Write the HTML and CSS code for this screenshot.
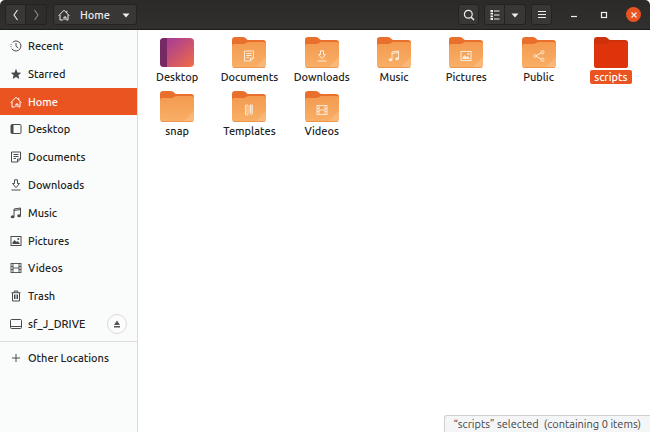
FILE: index.html
```html
<!DOCTYPE html>
<html lang="en">
<head>
<meta charset="UTF-8" />
<meta name="viewport" content="width=device-width, initial-scale=1" />
<title>Home</title>
<link rel="stylesheet" href="styles.css">
</head>
<body>

<!-- Shared icons -->
<svg class="defs" aria-hidden="true">
  <defs>
    <linearGradient id="folder-fill" x1="0" y1="0" x2="0" y2="1">
      <stop offset="0" stop-color="#f39a50" />
      <stop offset="1" stop-color="#f9b067" />
    </linearGradient>
    <linearGradient id="desktop-fill" x1="0" y1="0" x2="1" y2="1">
      <stop offset="0.2" stop-color="#ac4090" />
      <stop offset="1" stop-color="#f26c45" />
    </linearGradient>
  </defs>
  <symbol id="folder" viewBox="0 0 34 31">
    <path d="M0 9V3Q0 0 3 0H11Q13 0 14 1.5Q15 3 17 3H31Q34 3 34 6V12H0Z" fill="#e9702c" />
    <path d="M0 9Q0 7 2 7H11Q13 7 14 6Q15.500 5 17 5H32Q34 5 34 7V28Q34 31 31 31H3Q0 31 0 28Z" fill="url(#folder-fill)" />
    <path d="M34 20V28Q34 31 31 31H23Z" fill="#fff" opacity="0.14" />
    <path d="M1 30.500H33" stroke="#e98c45" opacity="0.7" />
  </symbol>
  <symbol id="folder-selected" viewBox="0 0 34 31">
    <path d="M0 9V3Q0 0 3 0H11Q13 0 14 1.500Q15 3 17 3H31Q34 3 34 6V28Q34 31 31 31H3Q0 31 0 28Z" fill="#cf310b" />
    <path d="M0 9Q0 7 2 7H11Q13 7 14 6Q15.500 5 17 5H32Q34 5 34 7V28Q34 31 31 31H3Q0 31 0 28Z" fill="#df340b" />
  </symbol>
  <symbol id="desktop-folder" viewBox="0 0 34 31">
    <rect y="1" width="34" height="29" rx="4" fill="url(#desktop-fill)" />
    <path d="M7 1H4Q0 1 0 5V26Q0 30 4 30H7Z" fill="#762a64" />
  </symbol>

  <symbol id="recent" viewBox="0 0 12 12">
    <path d="M3.200 1.800A5 5 0 1 1 1.700 8.600" fill="none" stroke="currentColor" />
    <path d="M1.100 7.200A5 5 0 0 1 2.400 2.500" fill="none" stroke="currentColor" stroke-dasharray="1 1.200" />
    <path d="M6 3V6.200L8.200 8" fill="none" stroke="currentColor" />
  </symbol>
  <symbol id="star" viewBox="0 0 12 12">
    <path d="M6 .8 7.500 4.400 11.200 4.700 8.400 7.200 9.300 11 6 9 2.700 11 3.600 7.200 .8 4.700 4.500 4.400Z" fill="currentColor" />
  </symbol>
  <symbol id="home" viewBox="0 0 12 12">
    <path d="M.7 6.700 6 1.200 11.300 6.700M8.800 3.600V1.800M2 5.800V11H4.800M10 5.800V11H8.500M6 11V8H8V11" fill="none" stroke="currentColor" />
  </symbol>
  <symbol id="desktop" viewBox="0 0 12 12">
    <rect x="1" y="1.500" width="10" height="9" rx="1" fill="none" stroke="currentColor" />
    <path d="M1 2H3.500V10H1Z" fill="currentColor" />
  </symbol>
  <symbol id="documents" viewBox="0 0 12 12">
    <path d="M1.500 1H10.500V8L7.500 11H1.500ZM10.500 8H7.500V11M3.500 3.500H8.500M3.500 5.500H8.500M3.500 7.500H6" fill="none" stroke="currentColor" />
  </symbol>
  <symbol id="downloads" viewBox="0 0 12 12">
    <path d="M4.500 .8H7.500V4.500H9.500L6 8.700 2.500 4.500H4.500ZM1.500 11H10.500" fill="none" stroke="currentColor" />
  </symbol>
  <symbol id="music" viewBox="0 0 12 12">
    <path d="M4 9.500V2L10.500 1V8.500M4 3.500 10.500 2.500" fill="none" stroke="currentColor" />
    <ellipse cx="2.600" cy="9.800" rx="1.900" ry="1.500" fill="currentColor" />
    <ellipse cx="9.100" cy="8.800" rx="1.900" ry="1.500" fill="currentColor" />
  </symbol>
  <symbol id="pictures" viewBox="0 0 12 12">
    <rect x="1" y="1.500" width="10" height="9" fill="none" stroke="currentColor" />
    <path d="M2.500 9V7.500L4.500 5 6.500 7 7.500 6 9.500 8V9Z" fill="currentColor" />
    <circle cx="8.300" cy="4" r="1" fill="currentColor" />
  </symbol>
  <symbol id="videos" viewBox="0 0 12 12">
    <path d="M1 1V11M11 1V11M3 1.500V10.500M9 1.500V10.500M1 1.500H11M1 10.500H11M3 6H9M1 4.500H3M1 7.500H3M9 4.500H11M9 7.500H11" fill="none" stroke="currentColor" stroke-width="0.9" />
  </symbol>
  <symbol id="trash" viewBox="0 0 12 12">
    <path d="M1.500 2.700H10.500M4.300 2.500V1H7.700V2.500M2.500 3V11H9.500V3M4.500 4.500V9M6 4.500V9M7.500 4.500V9" fill="none" stroke="currentColor" />
  </symbol>
  <symbol id="drive" viewBox="0 0 12 12">
    <rect x=".5" y="1.500" width="11" height="9" rx="1" fill="none" stroke="currentColor" />
    <path d="M1 8.500H11" stroke="currentColor" />
  </symbol>
  <symbol id="plus" viewBox="0 0 12 12">
    <path d="M6 2V10M2 6H10" stroke="currentColor" />
  </symbol>
  <symbol id="eject" viewBox="0 0 12 12">
    <path d="M6 2.500 9 7H3ZM3 8H9V9.500H3Z" fill="currentColor" />
  </symbol>
  <symbol id="public" viewBox="0 0 12 12">
    <path d="M9 2.500 2.500 6 9 9.500" fill="none" stroke="currentColor" />
    <g fill="#f5a55a" stroke="currentColor">
      <circle cx="9.500" cy="2.300" r="1.500" />
      <circle cx="2.300" cy="6" r="1.300" />
      <circle cx="9.500" cy="9.700" r="1.500" />
    </g>
  </symbol>
  <symbol id="templates" viewBox="0 0 12 12">
    <path d="M2.500 1H5V11H2.500ZM2.500 3H4M2.500 5H4M2.500 7H4M2.500 9H4M7 1H9.500V9L8.300 11 7 9Z" fill="none" stroke="currentColor" stroke-width="0.8" />
    <path d="M7 1H8.500V9H7Z" fill="currentColor" />
  </symbol>
  <symbol id="back" viewBox="0 0 12 12">
    <path d="M7.500 1 4 6 7.500 11" fill="none" stroke="currentColor" stroke-width="1.100" />
  </symbol>
  <symbol id="forward" viewBox="0 0 12 12">
    <path d="M4.500 1 8 6 4.500 11" fill="none" stroke="currentColor" stroke-width="1.100" />
  </symbol>
  <symbol id="caret" viewBox="0 0 12 12">
    <path d="M2.500 4.500H9.500L6 8.500Z" fill="currentColor" />
  </symbol>
  <symbol id="search" viewBox="0 0 12 12">
    <circle cx="5.300" cy="5.300" r="3.900" fill="none" stroke="currentColor" stroke-width="1.200" />
    <path d="M8.200 8.200 11 11" stroke="currentColor" stroke-width="1.500" />
  </symbol>
  <symbol id="list" viewBox="0 0 12 12">
    <path d="M1.500 2H4M1.500 4.700H4M1.500 7.300H4M1.500 10H4" stroke="currentColor" stroke-width="1.800" />
    <path d="M5 2H10.500M5 6H10.500M5 10H10.500" stroke="currentColor" stroke-width="1.100" />
  </symbol>
  <symbol id="menu" viewBox="0 0 12 12">
    <path d="M2 2.500H10M2 5.500H10M2 8.500H10" stroke="currentColor" />
  </symbol>
  <symbol id="minimize" viewBox="0 0 12 12">
    <path d="M3 7.500H9" stroke="currentColor" stroke-width="1.200" />
  </symbol>
  <symbol id="maximize" viewBox="0 0 12 12">
    <rect x="3.500" y="3.500" width="5" height="5" fill="none" stroke="currentColor" stroke-width="1.200" />
  </symbol>
  <symbol id="close" viewBox="0 0 12 12">
    <path d="M3.500 3.500 8.500 8.500M8.500 3.500 3.500 8.500" stroke="currentColor" stroke-width="1.300" />
  </symbol>
</svg>

<div class="window">

  <!-- Header bar -->
  <header class="headerbar">
    <div class="btn-group">
      <button type="button" class="btn" aria-label="Back"><svg class="icon"><use href="#back" /></svg></button>
      <button type="button" class="btn btn-dim" aria-label="Forward"><svg class="icon"><use href="#forward" /></svg></button>
    </div>
    <button type="button" class="btn path-btn">
      <svg class="icon"><use href="#home" /></svg>
      <span>Home</span>
      <svg class="icon"><use href="#caret" /></svg>
    </button>
    <div class="header-actions">
      <button type="button" class="btn" aria-label="Search"><svg class="icon"><use href="#search" /></svg></button>
      <div class="btn-group">
        <button type="button" class="btn" aria-label="List view"><svg class="icon"><use href="#list" /></svg></button>
        <button type="button" class="btn" aria-label="View options"><svg class="icon"><use href="#caret" /></svg></button>
      </div>
      <button type="button" class="btn" aria-label="Menu"><svg class="icon"><use href="#menu" /></svg></button>
    </div>
    <div class="window-controls">
      <button type="button" class="control" aria-label="Minimize"><svg class="icon"><use href="#minimize" /></svg></button>
      <button type="button" class="control" aria-label="Maximize"><svg class="icon"><use href="#maximize" /></svg></button>
      <button type="button" class="control close" aria-label="Close"><svg class="icon"><use href="#close" /></svg></button>
    </div>
  </header>

  <div class="content">

    <!-- Sidebar -->
    <nav class="sidebar" aria-label="Places">
      <ul class="places">
        <li><a href="#" class="place"><svg class="icon"><use href="#recent" /></svg>Recent</a></li>
        <li><a href="#" class="place"><svg class="icon"><use href="#star" /></svg>Starred</a></li>
        <li><a href="#" class="place active" aria-current="page"><svg class="icon"><use href="#home" /></svg>Home</a></li>
        <li><a href="#" class="place"><svg class="icon"><use href="#desktop" /></svg>Desktop</a></li>
        <li><a href="#" class="place"><svg class="icon"><use href="#documents" /></svg>Documents</a></li>
        <li><a href="#" class="place"><svg class="icon"><use href="#downloads" /></svg>Downloads</a></li>
        <li><a href="#" class="place"><svg class="icon"><use href="#music" /></svg>Music</a></li>
        <li><a href="#" class="place"><svg class="icon"><use href="#pictures" /></svg>Pictures</a></li>
        <li><a href="#" class="place"><svg class="icon"><use href="#videos" /></svg>Videos</a></li>
        <li><a href="#" class="place"><svg class="icon"><use href="#trash" /></svg>Trash</a></li>
        <li class="drive">
          <a href="#" class="place"><svg class="icon"><use href="#drive" /></svg>sf_J_DRIVE</a>
          <button type="button" class="eject" aria-label="Eject"><svg class="icon"><use href="#eject" /></svg></button>
        </li>
      </ul>
      <a href="#" class="place other"><svg class="icon"><use href="#plus" /></svg>Other Locations</a>
    </nav>

    <!-- Files -->
    <main class="files">
      <ul class="file-grid">
        <li class="file"><span class="thumb"><svg class="folder"><use href="#desktop-folder" /></svg></span><span class="name">Desktop</span></li>
        <li class="file"><span class="thumb"><svg class="folder"><use href="#folder" /></svg><svg class="icon emblem"><use href="#documents" /></svg></span><span class="name">Documents</span></li>
        <li class="file"><span class="thumb"><svg class="folder"><use href="#folder" /></svg><svg class="icon emblem"><use href="#downloads" /></svg></span><span class="name">Downloads</span></li>
        <li class="file"><span class="thumb"><svg class="folder"><use href="#folder" /></svg><svg class="icon emblem"><use href="#music" /></svg></span><span class="name">Music</span></li>
        <li class="file"><span class="thumb"><svg class="folder"><use href="#folder" /></svg><svg class="icon emblem"><use href="#pictures" /></svg></span><span class="name">Pictures</span></li>
        <li class="file"><span class="thumb"><svg class="folder"><use href="#folder" /></svg><svg class="icon emblem"><use href="#public" /></svg></span><span class="name">Public</span></li>
        <li class="file selected"><span class="thumb"><svg class="folder"><use href="#folder-selected" /></svg></span><span class="name">scripts</span></li>
        <li class="file"><span class="thumb"><svg class="folder"><use href="#folder" /></svg></span><span class="name">snap</span></li>
        <li class="file"><span class="thumb"><svg class="folder"><use href="#folder" /></svg><svg class="icon emblem"><use href="#templates" /></svg></span><span class="name">Templates</span></li>
        <li class="file"><span class="thumb"><svg class="folder"><use href="#folder" /></svg><svg class="icon emblem"><use href="#videos" /></svg></span><span class="name">Videos</span></li>
      </ul>
      <div class="status" role="status">“scripts” selected&nbsp; (containing 0 items)</div>
    </main>

  </div>
</div>

</body>
</html>
```
FILE: styles.css
```css
/* Reset & base */
*, *::before, *::after {
  box-sizing: border-box;
}
body {
  margin: 0;
  font-family: "Ubuntu", "Noto Sans", "Open Sans", sans-serif;
  font-size: 11px;
  line-height: 14px;
  color: #222;
  background: #fff;
}
ul {
  list-style: none;
  margin: 0;
  padding: 0;
}
a {
  color: inherit;
  text-decoration: none;
}
button {
  font: inherit;
  color: inherit;
  padding: 0;
  cursor: pointer;
}

.defs {
  position: absolute;
  width: 0;
  height: 0;
}
.icon {
  display: block;
  flex: none;
  width: 12px;
  height: 12px;
}

.window {
  display: flex;
  flex-direction: column;
  min-height: 100vh;
}

/* Header bar */
.headerbar {
  display: flex;
  align-items: center;
  gap: 6px;
  height: 30px;
  padding: 0 9px 0 5px;
  background: linear-gradient(#2b2a28, #32302e);
  border-bottom: 1px solid #1d1c1b;
  border-radius: 5px 5px 0 0;
  color: #eee;
}
.btn-group {
  display: flex;
}
.btn {
  display: flex;
  align-items: center;
  justify-content: center;
  width: 21px;
  height: 21px;
  border: 1px solid #242322;
  border-radius: 3px;
  background: #393735;
}
.btn-group .btn:first-child {
  border-radius: 3px 0 0 3px;
}
.btn-group .btn:last-child {
  border-left: 0;
  border-radius: 0 3px 3px 0;
}
.btn-dim {
  background: #2f2d2c;
  color: #8b8986;
}
.path-btn {
  gap: 10px;
  width: auto;
  padding: 0 4px;
  font-weight: 500;
}
.header-actions {
  display: flex;
  gap: 5px;
  margin-left: auto;
}
.window-controls {
  display: flex;
  gap: 15px;
  margin-left: 8px;
}
.control {
  display: flex;
  align-items: center;
  justify-content: center;
  width: 15px;
  height: 15px;
  border: 0;
  border-radius: 50%;
  background: transparent;
}
.close {
  background: #e95420;
}

.content {
  display: flex;
  flex: 1;
}

/* Sidebar */
.sidebar {
  flex: none;
  width: 138px;
  padding-top: 2px;
  background: #fafcfb;
  border-right: 1px solid #dcdcdb;
}
.places {
  display: grid;
  grid-auto-rows: 1fr;
  height: 306px;
}
.place {
  display: flex;
  align-items: center;
  gap: 6px;
  height: 100%;
  padding-left: 10px;
  font-weight: 500;
}
.place .icon {
  color: #4a4a4a;
}
.active,
.active .icon {
  color: #fff;
}
.active {
  background: #e95420;
}
.drive {
  display: flex;
  align-items: center;
  justify-content: space-between;
  padding-right: 10px;
}
.eject {
  display: flex;
  align-items: center;
  justify-content: center;
  width: 20px;
  height: 20px;
  border: 1px solid #dadada;
  border-radius: 50%;
  background: #fcfcfc;
  color: #555;
}
.other {
  height: 32px;
  margin-top: 3px;
  border-top: 1px solid #dededd;
}

/* Files */
.files {
  display: flex;
  flex: 1;
  flex-direction: column;
  justify-content: space-between;
  min-width: 0;
}
.file-grid {
  display: grid;
  grid-template-columns: repeat(auto-fill, minmax(70px, 1fr));
  row-gap: 7px;
  padding: 7px 3px;
}
.file {
  display: flex;
  flex-direction: column;
  align-items: center;
  gap: 2px;
}
.thumb {
  display: grid;
  place-items: center;
}
.thumb > * {
  grid-area: 1 / 1;
}
.folder {
  display: block;
  width: 34px;
  height: 31px;
}
.emblem {
  margin-top: 6px;
  color: #fdebd8;
}
.name {
  padding: 0 4px;
  border-radius: 2px;
  font-weight: 500;
}
.selected .name {
  background: #e95420;
  color: #fff;
}

/* Status bar */
.status {
  align-self: flex-end;
  padding: 1px 9px 1px 8px;
  border: 1px solid #cfd0d3;
  border-width: 1px 0 0 1px;
  border-radius: 3px 0 0 0;
  background: #f4f5f6;
  color: #444;
}
```
